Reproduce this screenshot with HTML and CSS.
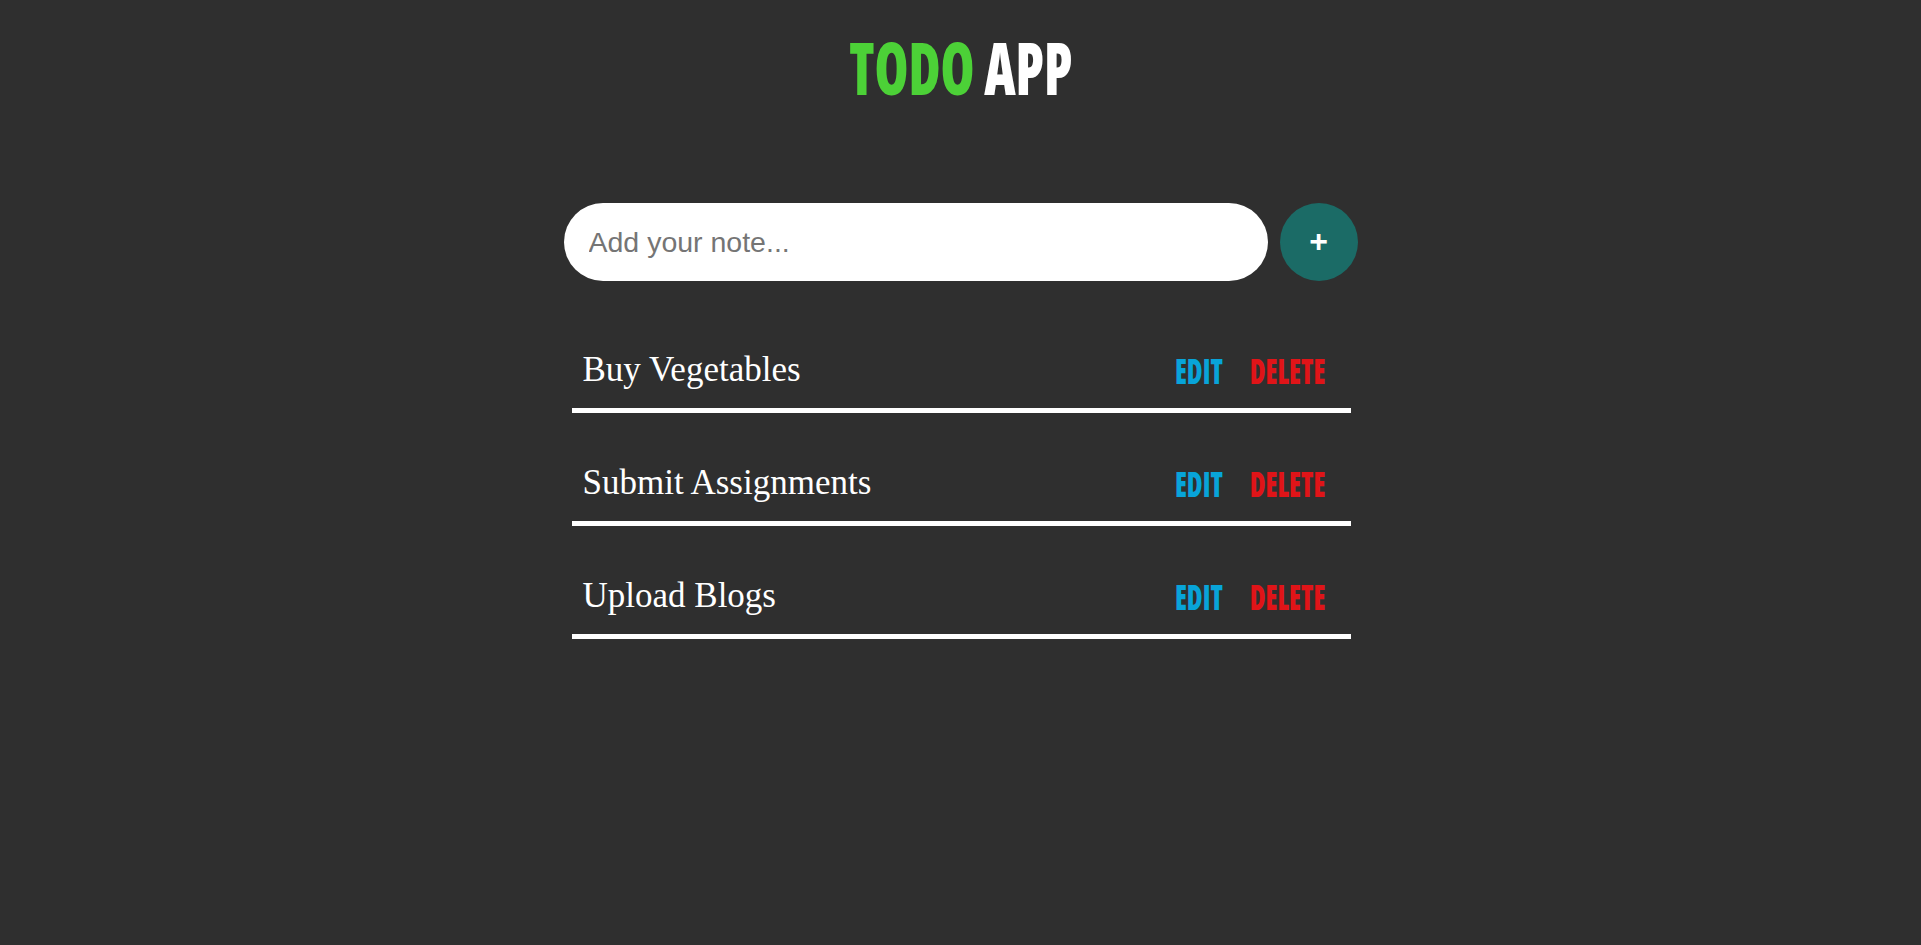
FILE: index.html
```html
<!DOCTYPE html>
<html lang="en">
<head>
<meta charset="utf-8">
<title>Todo App</title>
<link rel="stylesheet" href="styles.css">
</head>
<body>
<div class="app">
  <h1 class="title"><span class="title-text"><span class="todo">TODO</span> APP</span></h1>
  <form class="form">
    <input class="note-input" type="text" placeholder="Add your note...">
    <button class="add-btn" type="button">+</button>
  </form>
  <ul class="list">
    <li class="item">
      <span class="item-text">Buy Vegetables</span>
      <span class="actions"><span class="edit">EDIT</span><span class="delete">DELETE</span></span>
    </li>
    <li class="item">
      <span class="item-text">Submit Assignments</span>
      <span class="actions"><span class="edit">EDIT</span><span class="delete">DELETE</span></span>
    </li>
    <li class="item">
      <span class="item-text">Upload Blogs</span>
      <span class="actions"><span class="edit">EDIT</span><span class="delete">DELETE</span></span>
    </li>
  </ul>
</div>
</body>
</html>
```
FILE: styles.css
```css
html, body {
  margin: 0;
  padding: 0;
  background: #2f2f2f;
  min-height: 100%;
}

.app {
  width: 794px;
  margin: 0 auto;
}

.title {
  margin: 31px 0 0;
  text-align: center;
  font-family: "Open Sans", "Liberation Sans", sans-serif;
  font-weight: 800;
  font-stretch: 75%;
  font-size: 73px;
  line-height: 72px;
  color: #ffffff;
}

.title-text {
  display: inline-block;
  transform: scaleX(0.75);
  transform-origin: center;
}

.todo {
  color: #4cd137;
}

.form {
  display: flex;
  gap: 12px;
  margin-top: 100px;
}

.note-input {
  flex: 1;
  height: 78px;
  box-sizing: border-box;
  border: none;
  border-radius: 39px;
  padding: 0 25px;
  background: #ffffff;
  font-family: "Liberation Sans", Arial, sans-serif;
  font-size: 28.5px;
  color: #333;
  outline: none;
}

.note-input::placeholder {
  color: #757575;
}

.add-btn {
  width: 78px;
  height: 78px;
  flex: none;
  border: none;
  border-radius: 50%;
  background: #1b6b66;
  color: #ffffff;
  font-family: "Liberation Sans", Arial, sans-serif;
  font-weight: 700;
  font-size: 32px;
  line-height: 1;
  padding: 0 0 3px;
  cursor: pointer;
}

.list {
  list-style: none;
  margin: 0 7px 0 8px;
  padding: 19px 0 0;
}

.item {
  display: flex;
  align-items: center;
  justify-content: space-between;
  height: 76px;
  margin-top: 32px;
  padding: 0 25px 0 11px;
  border-bottom: 5px solid #ffffff;
}

.item-text {
  font-family: "Liberation Serif", "Times New Roman", serif;
  font-size: 35px;
  color: #ffffff;
}

.actions {
  display: inline-flex;
  gap: 35px;
  font-family: "Open Sans", "Liberation Sans", sans-serif;
  font-weight: 800;
  font-stretch: 75%;
  font-size: 35px;
  transform: scaleX(0.77);
  transform-origin: right center;
}

.edit {
  color: #08a4d9;
  cursor: pointer;
}

.delete {
  color: #e01418;
  cursor: pointer;
}
```
